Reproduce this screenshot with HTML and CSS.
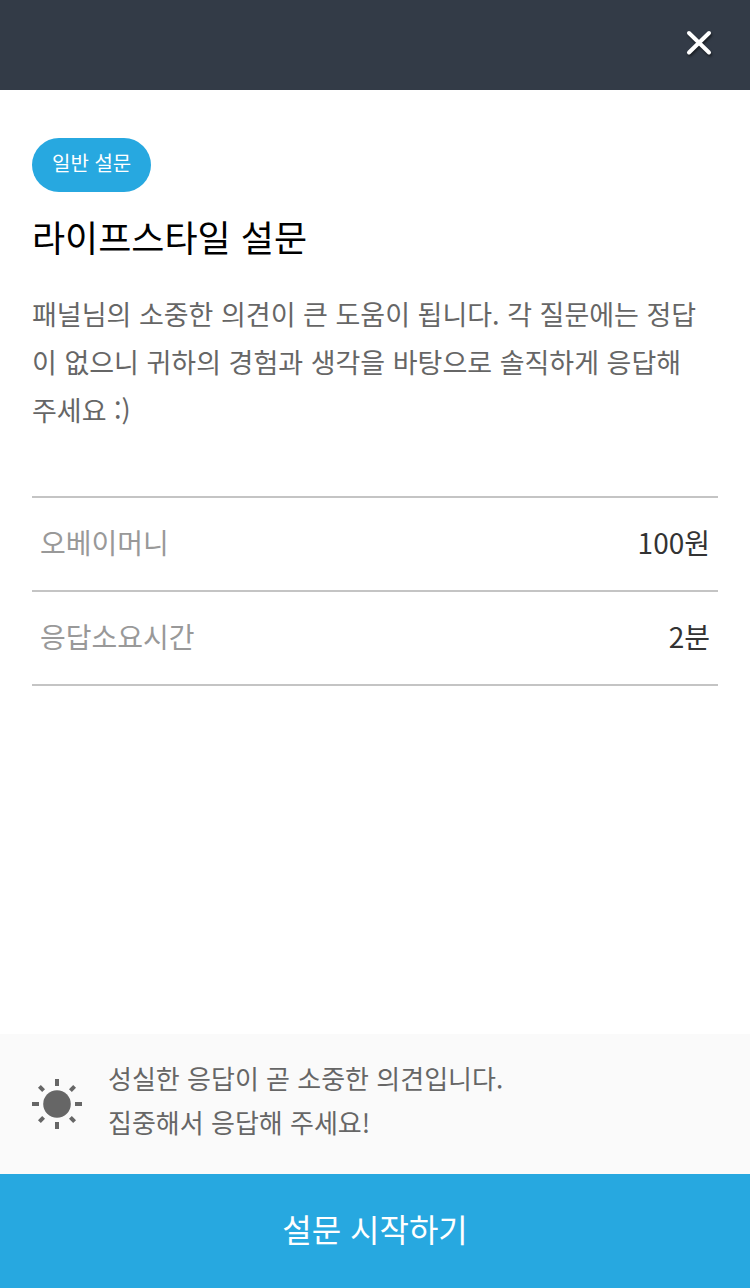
FILE: index.html
```html
<!DOCTYPE html>
<html lang="ko">
<head>
    <meta charset="UTF-8">
    <meta name="viewport" content="width=device-width, initial-scale=1.0">
    <title>라이프스타일 설문</title>
    <link rel="stylesheet" href="styles.css">
</head>
<body>
    <header class="header">
        <button type="button" class="close" aria-label="닫기">
            <svg width="30" height="30" viewBox="0 0 30 30">
                <path d="M5 5L25 24.5M25 5L5 24.5" />
            </svg>
        </button>
    </header>

    <main class="content">
        <span class="badge">일반 설문</span>
        <h1>라이프스타일 설문</h1>
        <p class="description">패널님의 소중한 의견이 큰 도움이 됩니다. 각 질문에는 정답이 없으니 귀하의 경험과 생각을 바탕으로 솔직하게 응답해 <span class="nowrap">주세요 :)</span></p>

        <table class="info">
            <tr>
                <th scope="row">오베이머니</th>
                <td>100원</td>
            </tr>
            <tr>
                <th scope="row">응답소요시간</th>
                <td>2분</td>
            </tr>
        </table>
    </main>

    <footer>
        <div class="notice">
            <svg class="sun" width="50" height="50" viewBox="0 0 50 50">
                <circle cx="25" cy="25" r="13.8" />
                <path d="M25 0V7M25 43V50M0 25H7M43 25H50" />
                <path d="M7.4 7.4L11.6 11.6M42.6 7.4L38.4 11.6M7.4 42.6L11.6 38.4M42.6 42.6L38.4 38.4" />
            </svg>
            <p>성실한 응답이 곧 소중한 의견입니다.<br>집중해서 응답해 주세요!</p>
        </div>
        <button type="button" class="start">설문 시작하기</button>
    </footer>
</body>
</html>
```

FILE: styles.css
```css
* {
    box-sizing: border-box;
}
body {
    display: flex;
    flex-direction: column;
    min-height: 100vh;
    margin: 0;
    font-family: "Noto Sans CJK KR", sans-serif;
    font-size: 28px;
    color: #666;
    background-color: #fff;
}
button {
    border: 0;
    font-family: inherit;
    cursor: pointer;
}
.header {
    display: flex;
    justify-content: flex-end;
    padding: 20px 28px 24px;
    background-color: #333b47;
}
.close {
    display: flex;
    padding: 8px;
    background: none;
}
.close svg {
    fill: none;
    stroke: #fff;
    stroke-width: 4;
    stroke-linecap: round;
    filter: drop-shadow(1px 2px 1px rgba(0, 0, 0, 0.5));
}
.content {
    flex: 1;
    padding: 48px 32px;
}
.badge {
    display: block;
    width: fit-content;
    padding: 9px 20px 13px;
    border-radius: 27px;
    font-size: 20px;
    line-height: 32px;
    color: #fff;
    background-color: #27a8e0;
}
h1 {
    margin: 18px 0 28px;
    font-size: 36px;
    font-weight: 400;
    line-height: 52px;
    color: #000;
}
.description {
    margin: 0 0 62px;
    font-size: 27px;
    line-height: 48px;
}
.nowrap {
    white-space: nowrap;
}
.info {
    width: 100%;
    border-collapse: collapse;
    border-top: 2px solid #c4c4c4;
}
.info tr {
    border-bottom: 2px solid #c4c4c4;
}
.info th,
.info td {
    padding: 20px 8px 24px;
    font-weight: 400;
    line-height: 48px;
}
.info th {
    text-align: left;
    color: #999;
}
.info td {
    text-align: right;
    color: #333;
}
.notice {
    display: flex;
    align-items: center;
    gap: 26px;
    padding: 22px 32px;
    background-color: #fafafa;
}
.notice p {
    margin: 0;
    padding-bottom: 8px;
    font-size: 26px;
    line-height: 44px;
}
.sun {
    flex-shrink: 0;
    fill: #666;
}
.sun path {
    stroke: #666;
    stroke-width: 4;
}
.start {
    display: block;
    width: 100%;
    padding: 30px 0 36px;
    font-size: 32px;
    line-height: 48px;
    color: #fff;
    background-color: #27a8e0;
}
```
